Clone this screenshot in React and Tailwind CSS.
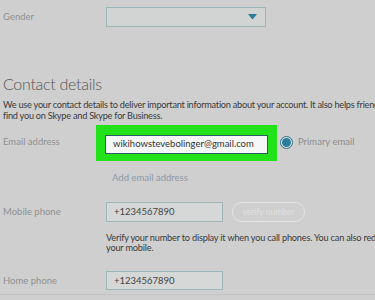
export default function App() {
  return (
    <div className="w-[375px] h-[300px] overflow-hidden bg-[#cfcfcf] font-['Lato',sans-serif] relative">
      {/* Gender */}
      <div className="flex items-center pt-[7px] pl-[3px]">
        <div className="w-[103px] text-[9.5px] text-[#8f8f8f]">Gender</div>
        <div className="w-[160px] h-[20px] border border-[#9fb6b9] bg-[#d2d3d3] flex items-center justify-end pr-[8px]">
          <svg width="9" height="6" viewBox="0 0 9 6"><path d="M0 0 H9 L4.5 5.5 Z" fill="#2a7a98" /></svg>
        </div>
      </div>

      {/* Contact details */}
      <div className="pl-[3px] mt-[47px] text-[16px] leading-[20px] text-[#555] font-light tracking-[-0.3px]">Contact details</div>
      <p className="pl-[3px] mt-[6px] text-[9.2px] leading-[10.5px] text-[#3a3a3a] tracking-[-0.25px] whitespace-nowrap">
        We use your contact details to deliver important information about your account. It also helps friends<br />
        find you on Skype and Skype for Business.
      </p>

      {/* Email */}
      <div className="flex items-center pl-[3px] mt-[4px]">
        <div className="w-[93px] text-[9.5px] text-[#8f8f8f] -mt-[2px]">Email address</div>
        <div className="bg-[#22e31a] pt-[10px] pb-[7px] px-[9px]">
          <div className="w-[163px] h-[19px] border-[1.5px] border-[#2c5d66] bg-[#f6f7f7] flex items-center pl-[7px] text-[9.5px] text-[#333]">wikihowstevebolinger@gmail.com</div>
        </div>
        <div className="flex items-center ml-[3px] -mt-[1px]">
          <div className="w-[13px] h-[13px] rounded-full border border-[#2a6f86] flex items-center justify-center bg-[#dfe6e8]">
            <div className="w-[9px] h-[9px] rounded-full bg-[#2b7d9c]" />
          </div>
          <span className="ml-[5px] text-[9.5px] text-[#8c8c8c]">Primary email</span>
        </div>
      </div>
      <div className="pl-[112px] mt-[10px] text-[9.5px] text-[#8d98a6]">Add email address</div>

      {/* Mobile */}
      <div className="flex items-center pl-[3px] mt-[17px]">
        <div className="w-[103px] text-[9.5px] text-[#8f8f8f]">Mobile phone</div>
        <div className="w-[117px] h-[20px] border border-[#9fb6b9] bg-[#d6d7d7] flex items-center pl-[7px] text-[9.5px] text-[#444]">+1234567890</div>
        <div className="ml-[9px] w-[73px] h-[20px] rounded-full border border-[#e6e6e6] flex items-center justify-center text-[8.5px] text-[#e0e0e0]">verify number</div>
      </div>
      <p className="pl-[106px] mt-[11px] text-[9.2px] leading-[10px] text-[#3a3a3a] tracking-[-0.2px] whitespace-nowrap">
        Verify your number to display it when you call phones. You can also redirect<br />
        your mobile.
      </p>

      {/* Home */}
      <div className="flex items-center pl-[3px] mt-[18px]">
        <div className="w-[103px] text-[9.5px] text-[#8f8f8f]">Home phone</div>
        <div className="w-[117px] h-[19px] border border-[#9fb6b9] bg-[#d6d7d7] flex items-center pl-[7px] text-[9.5px] text-[#444]">+1234567890</div>
      </div>
      <div className="mt-[4px] h-[1px] bg-[#c4c4c4]" />
    </div>
  );
}
